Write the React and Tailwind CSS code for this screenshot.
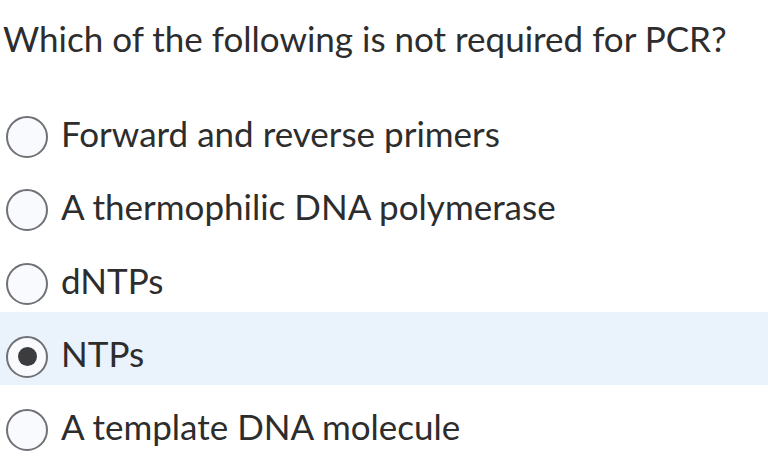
export default function App() {
  const options = [
    "Forward and reverse primers",
    "A thermophilic DNA polymerase",
    "dNTPs",
    "NTPs",
    "A template DNA molecule",
  ];
  const selected = 3;

  return (
    <div className="w-[768px] h-[470px] bg-white overflow-hidden" style={{ fontFamily: "Lato, 'Noto Sans', sans-serif" }}>
      <div className="pt-[16px] pl-[3px] text-[35px] leading-[44px] text-[#2d2d2d]">
        Which of the following is not required for PCR?
      </div>
      <div className="mt-[32px] flex flex-col">
        {options.map((opt, i) => (
          <div
            key={i}
            className={`h-[73.25px] flex items-start pt-[24px] pl-[6px] ${i === selected ? "bg-[#eaf2fb]" : ""}`}
          >
            <div className="w-[42px] h-[42px] rounded-full border-2 border-[#6f7175] bg-[#f8fafd] flex items-center justify-center shrink-0">
              {i === selected && <div className="w-[19px] h-[19px] rounded-full bg-[#3c3c3e]" />}
            </div>
            <div className="ml-[13px] text-[35px] leading-[34px] text-[#2d2d2d] whitespace-nowrap">{opt}</div>
          </div>
        ))}
      </div>
    </div>
  );
}
